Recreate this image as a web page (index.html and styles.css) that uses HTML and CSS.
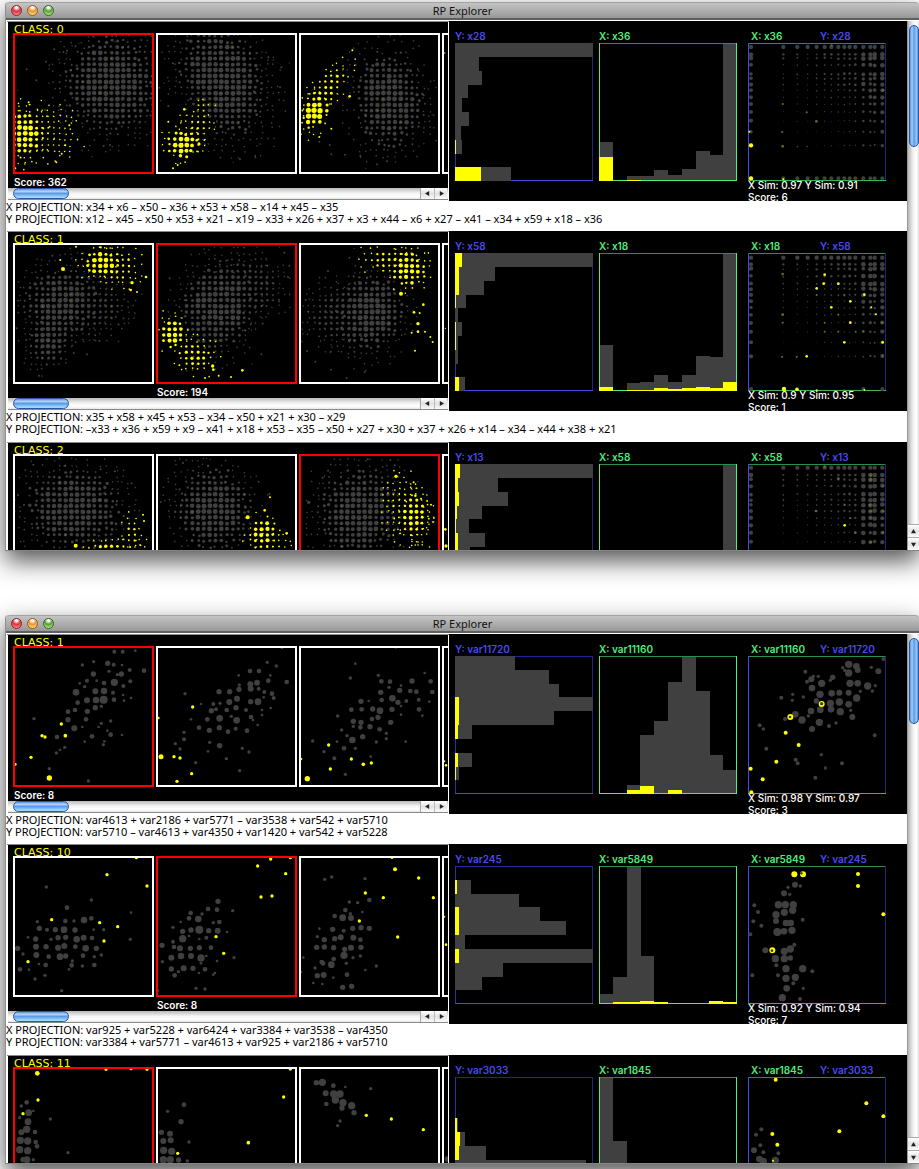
FILE: index.html
```html
<!DOCTYPE html>
<html lang="en">
<head>
<meta charset="utf-8">
<title>RP Explorer</title>
<link rel="stylesheet" href="styles.css">
</head>
<body>
<main class="desktop" id="desktop"></main>
<script src="app.js"></script>
</body>
</html>
```
FILE: styles.css
```css
* { box-sizing: border-box; }
body {
  margin: 0;
  background: #fff;
  font-family: "Inter", Verdana, sans-serif;
  font-size: 10px;
  line-height: 12px;
  color: #000;
}
.desktop {
  display: flex;
  flex-direction: column;
  gap: 64px;
  min-height: 100vh;
  padding: 2px 0 5px 5px;
  overflow: hidden;
}
.window {
  background: #fff;
  border-left: 1px solid #8f8f8f;
  border-bottom: 1px solid #858585;
  border-radius: 4px 4px 0 0;
  box-shadow: 0 10px 24px rgba(0, 0, 0, .68);
}
.titlebar {
  display: flex;
  align-items: center;
  height: 18px;
  padding-left: 5px;
  border-top: 1px solid #a2a2a2;
  border-bottom: 2px solid #5f5f5f;
  border-radius: 4px 4px 0 0;
  background: linear-gradient(#c4c4c4, #989898);
}
.lights { display: flex; gap: 5px; }
.light {
  width: 11px;
  height: 11px;
  padding: 0;
  border: 1px solid;
  border-radius: 50%;
}
.light-close { border-color: #8e2026; background: radial-gradient(circle at 50% 15%, #fff 0 10%, #d8323a 45%, #ee5560 65%, #ffb4b4 100%); }
.light-min { border-color: #9a5a1c; background: radial-gradient(circle at 50% 15%, #fff 0 10%, #e69138 45%, #f6b850 65%, #fff0a0 100%); }
.light-zoom { border-color: #356a20; background: radial-gradient(circle at 50% 15%, #fff 0 10%, #5a9a38 45%, #86c552 65%, #d2f5a0 100%); }
.title {
  flex: 1;
  margin: 0 48px 0 0;
  font: 400 11px/15px "Noto Sans", "Open Sans", sans-serif;
  text-align: center;
  color: #111;
}
.body {
  display: grid;
  grid-template-columns: minmax(0, 1fr) 12px;
  height: 530px;
  padding-top: 1px;
  overflow: hidden;
}
.rows { overflow: hidden; }
.row + .row { padding-bottom: 1px; }
.panes {
  display: grid;
  grid-template-columns: 442px minmax(0, 1fr);
  grid-template-rows: 180px;
  padding-left: 1px;
}
.left { padding: 0 1px; border-top: 1px solid #8a8a8a; min-width: 0; }
.strip {
  height: 166px;
  padding-left: 5px;
  overflow: hidden;
  background: #000;
}
.class-name {
  height: 11px;
  margin: 0;
  padding-left: 1px;
  font-family: "DejaVu Sans", Verdana, sans-serif;
  font-size: 11px;
  font-weight: 400;
  line-height: 15px;
  color: #ff0;
}
.thumbs { display: flex; gap: 2px; }
.thumb { flex: none; width: 141px; }
.plot {
  display: block;
  width: 141px;
  height: 141px;
  padding: 0;
  border: 2px solid #fff;
  background: #000;
}
.plot[aria-pressed="true"] { border-color: #f00; }
.plot svg, .chart svg { display: block; width: 100%; height: 100%; overflow: hidden; }
.score {
  padding: 2px 0 0 1px;
  font-weight: 600;
  color: #fff;
}
.hbar {
  display: flex;
  align-items: center;
  height: 12px;
  padding: 0 1px 0 5px;
  border-bottom: 1px solid #8a8a8a;
  background: linear-gradient(#b8b8b8, #f2f2f2 45%, #fff 75%, #e6e6e6);
}
.hthumb {
  width: 56px;
  height: 11px;
  border: 1px solid #2b56a4;
  border-radius: 6px;
  background: linear-gradient(#5a8fdc, #b8d6f8 25%, #5b9bea 50%, #8fcaf8 80%, #a8e0ff);
}
.harrows { display: flex; margin-left: auto; }
.arrow {
  display: flex;
  align-items: center;
  justify-content: center;
  width: 13px;
  height: 11px;
  padding: 0;
  border: 0;
  border-left: 1px solid #bbb;
  background: linear-gradient(#fff, #e2e2e2 50%, #fafafa);
}
.harrows .arrow:first-child {
  border-left: 0;
  border-radius: 0;
  box-shadow: -1px 0 #a8a8a8;
}
.arrow svg { width: 5px; height: 5px; fill: #222; }
.right {
  display: flex;
  align-items: flex-start;
  padding: 9px 0 0 6px;
  background: #000;
}
.chart-block { width: 138px; margin-right: 6px; }
.chart-block + .chart-block { margin-right: 11px; }
.chart-label {
  display: grid;
  grid-template-columns: 69px 1fr;
  height: 13px;
  margin: 0;
  font-weight: 600;
  white-space: nowrap;
}
.pair { padding-left: 3px; }
.green { color: #4fec7d; }
.blue { color: #4a4aee; }
.chart { width: 138px; height: 138px; }
.sim { margin: -2px 0 0; font-weight: 500; color: #fff; white-space: nowrap; }
.projection {
  height: 30px;
  margin: 0;
  font-family: "Noto Sans", "Open Sans", sans-serif;
  font-size: 11px;
  white-space: nowrap;
}
.vbar {
  display: flex;
  flex-direction: column;
  align-items: center;
  padding-top: 4px;
  border-left: 1px solid #9a9a9a;
  background: linear-gradient(90deg, #b5b5b5, #f0f0f0 45%, #fff 75%, #e2e2e2);
}
.vthumb {
  width: 10px;
  border: 1px solid #2b56a4;
  border-radius: 5px;
  background: linear-gradient(90deg, #5a8fdc, #a5ccf8 25%, #5b9bea 50%, #8fcaf8 80%, #5a8fdc);
}
.varrows { width: 100%; margin-top: auto; }
.varrows .arrow { width: 100%; height: 13px; border-left: 0; border-top: 1px solid #aaa; }
```
FILE: app.js
```javascript
const GRAY = '#404040';
const YELLOW = '#ffff00';
const DIM = '#6a6a20';

function makeRandom(seed) {
  let s = seed;
  return () => {
    s = (s * 16807) % 2147483647;
    return s / 2147483647;
  };
}

const dot = (x, y, r, fill) =>
  `<circle cx="${x.toFixed(1)}" cy="${y.toFixed(1)}" r="${r.toFixed(1)}" fill="${fill}"/>`;

/* "x y r, x y r" -> circles */
const dots = (text, fill) => text.split(',').filter(t => t.trim()).map(t => {
  const [x, y, r] = t.trim().split(/\s+/).map(Number);
  return dot(x, y, r, fill);
}).join('');

/* Binned cloud: dot size falls with the distance from the centre. */
function cloud([cx, cy, rx, ry, deg, max], fill, rnd) {
  const step = 17.3, a = deg * Math.PI / 180;
  let out = '';
  const reach = Math.max(rx, ry) * 1.4;
  for (let gx = Math.floor((cx - reach) / step); gx * step < cx + reach; gx++) {
    for (let gy = Math.floor((cy - reach) / step); gy * step < cy + reach; gy++) {
      const x = gx * step + 6, y = gy * step + 3;
      const dx = x - cx, dy = y - cy;
      const u = (dx * Math.cos(a) + dy * Math.sin(a)) / rx;
      const v = (dy * Math.cos(a) - dx * Math.sin(a)) / ry;
      const d = Math.sqrt(u * u + v * v) + (rnd() - .5) * .18;
      if (d > 1.3 || (d > .85 && rnd() < (d - .75) * 1.3)) continue;
      const r = Math.max(2.4, max * .95 * (1.2 - d * d) * (.75 + rnd() * .35));
      const j = d > .7 ? 9 : 2;
      out += dot(x + (rnd() - .5) * j, y + (rnd() - .5) * j, Math.min(r, max), fill);
      if (fill === GRAY && d < .9 && rnd() < .03) out += dot(x, y, 2.5, DIM);
    }
  }
  return out;
}

const windows = [
  {
    vthumb: 122,
    rows: [
      {
        name: 'CLASS: 0', selected: 0, score: 'Score: 362',
        thumbs: [
          { box: '45 105', g: [[335, 250, 165, 165, -20, 7.4]], gs: '163 148 3,190 156 3,237 130 2,283 112 2,80 208 3,109 241 3,53 271 2,138 185 3,201 152 3,345 125 2,386 138 2,276 470 2,311 438 3,330 435 3,135 330 3,150 380 3,180 345 3', y: [[65, 402, 75, 78, 0, 7.4], [120, 395, 100, 85, 0, 3]], ys: '86 307 3,46 505 3,169 487 3,185 461 3,196 436 3,208 376 3' },
          { box: '474 105', g: [[668, 240, 135, 195, -22, 7.4]], gs: '478 263 3,482 302 2,505 318 3,519 190 3,805 172 3,820 180 2,844 202 3,868 189 2,840 262 3,700 487 2,766 472 3,720 478 3,574 107 2', y: [[550, 432, 56, 52, 0, 7.6], [590, 385, 45, 80, 25, 3.4]], ys: '553 328 4,519 505 3,505 365 3,533 495 3' },
          { box: '36 105', g: [[298, 300, 118, 165, -8, 7.4]], gs: '230 505 2,264 493 3,294 484 3,214 467 3,168 464 3,127 463 3,91 425 3,404 286 3,430 344 2,208 131 2,122 435 3,386 208 3', y: [[75, 337, 44, 62, 15, 8], [115, 265, 42, 95, 35, 4.4]], ys: '190 151 3,182 289 4,127 386 3,91 411 3' },
          { box: '0 0', g: [], y: [], ys: '2 54 2' }
        ],
        yVar: 'x28', xVar: 'x36', sim: 'X Sim: 0.97 Y Sim: 0.91', pairScore: 'Score: 6',
        yHist: [[414, 72, 81, 39, 20, 42, 18, 21, 0, 167], [0, 0, 0, 0, 0, 0, 0, 2, 0, 78]],
        xHist: [[118, 0, 16, 16, 34, 19, 37, 91, 79, 414], [73, 0, 4, 0, 0, 0, 0, 0, 0, 0]],
        lattice: { box: '474 129', ox: 0, rows: [141, 163, 175, 195, 222, 236, 253, 271, 292, 313, 336, 363, 395, 436, 535], bottom: 6, side: [1.1, 1.05, 1.1, 1.2],
          ys: '483 436 6.5,483 535 6.5,478 395 3,580 538 3', ds: '578 312 3,576 396 3,578 439 4,650 337 3,679 364 4,622 440 2,651 440 2,725 136 3,879 271 4' },
        xp: 'x34 + x6 – x50 – x36 + x53 + x58 – x14 + x45 – x35',
        yp: 'x12 – x45 – x50 + x53 + x21 – x19 – x33 + x26 + x37 + x3 + x44 – x6 + x27 – x41 – x34 + x59 + x18 – x36'
      },
      {
        name: 'CLASS: 1', selected: 1, score: 'Score: 194',
        thumbs: [
          { box: '45 62', g: [[185, 235, 130, 120, -15, 7.2], [150, 340, 68, 95, 20, 6.8], [300, 250, 95, 85, 0, 4.4]], gs: '157 94 3,261 390 3,117 454 3,221 386 3,298 350 3,54 229 3,50 312 3', y: [[305, 115, 58, 50, 0, 7], [350, 125, 75, 62, 20, 4]], ys: '189 134 6,181 107 3,438 158 4,396 175 5,392 197 4,228 67 3,411 203 3' },
          { box: '474 62', g: [[655, 245, 125, 155, 25, 7.4], [750, 190, 110, 95, -20, 4.6]], gs: '838 68 2,853 85 3,868 124 3,864 158 3,837 226 3,784 390 3,509 162 3,756 419 2', y: [[518, 328, 42, 55, 0, 6.8], [585, 395, 62, 58, 10, 5]], ys: '638 425 5,640 436 4,615 461 3,727 438 4,693 458 3,656 454 3' },
          { box: '36 62', g: [[245, 265, 112, 135, 10, 7.6], [145, 270, 105, 95, 0, 4.6]], gs: '196 72 2,181 100 3,117 140 3,50 227 3,173 461 3,126 436 3,79 412 3,54 380 3,227 443 3', y: [[355, 135, 62, 68, 20, 6.4], [290, 105, 80, 34, 0, 4.4]], ys: '336 208 6,375 264 4,403 241 4,387 298 5,392 266 3,378 379 3,424 338 3,431 353 3,387 322 4,408 322 3,368 325 3' },
          { box: '0 0', g: [], y: [], ys: '4 250 2' }
        ],
        yVar: 'x58', xVar: 'x18', sim: 'X Sim: 0.9 Y Sim: 0.95', pairScore: 'Score: 1',
        yHist: [[414, 119, 87, 33, 9, 21, 9, 9, 0, 30], [21, 12, 12, 2, 0, 2, 2, 0, 0, 12]],
        xHist: [[139, 0, 25, 27, 49, 27, 49, 105, 103, 414], [13, 0, 2, 2, 8, 5, 8, 13, 8, 28]],
        lattice: { box: '474 84', ox: 0, rows: [98, 118, 132, 154, 176, 192, 210, 229, 248, 269, 293, 320, 352, 394, 492], bottom: 0, side: [1.1, 1.05, 1.1, 1.2],
          ys: '582 492 6.5,621 493 5.5,701 176 4,745 176 4,680 190 4,704 149 4,781 229 4,724 247 4,823 209 4,844 247 3,858 268 3,781 293 4,763 352 4,878 352 4,650 394 4,680 496 3,823 495 3', ds: '578 147 4,578 269 4,578 293 3,680 210 3,704 293 3,704 320 3,745 269 3,763 210 3,745 320 3,797 320 3,820 320 3,876 293 4,576 396 3,620 396 3,878 394 3,763 496 3,745 496 2' },
        xp: 'x35 + x58 + x45 + x53 – x34 – x50 + x21 + x30 – x29',
        yp: '–x33 + x36 + x59 + x9 – x41 + x18 + x53 – x35 – x50 + x27 + x30 + x37 + x26 + x14 – x34 – x44 + x38 + x21'
      },
      {
        name: 'CLASS: 2', selected: 2, score: '',
        thumbs: [
          { box: '45 78', g: [[222, 235, 165, 140, 10, 7.3]], gs: '178 85 3,345 124 3,302 118 3,100 104 3,395 160 3,54 195 3', y: [[320, 360, 100, 30, -8, 5.2], [395, 305, 28, 52, 0, 3.6]], ys: '227 347 6,429 254 3,432 273 3' },
          { box: '474 78', g: [[640, 240, 128, 148, -8, 7.3]], gs: '549 99 3,620 85 2,482 216 3,808 192 3,776 155 3', y: [[790, 310, 50, 55, 10, 6.2], [810, 345, 58, 34, 0, 3]], ys: '743 262 6,810 202 3,794 241 4,860 310 4' },
          { box: '905 78', g: [[1080, 250, 138, 155, 12, 7.3]], gs: '986 122 3,970 143 3,1105 88 3,1173 90 3,1186 106 3,928 217 5', y: [[1245, 250, 48, 80, 0, 6], [1220, 240, 66, 100, -15, 3.2]], ys: '1190 139 5,1243 157 3,1295 224 3' },
          { box: '0 0', g: [], y: [], ys: '4 220 4,6 270 5' }
        ],
        yVar: 'x13', xVar: 'x58', sim: '', pairScore: '',
        yHist: [[414, 129, 160, 81, 42, 90, 45, 20, 0, 60], [15, 9, 12, 6, 2, 9, 9, 0, 0, 9]],
        xHist: [[0, 0, 0, 0, 0, 0, 0, 0, 0, 414], [0, 0, 0, 0, 0, 0, 0, 0, 0, 0]],
        lattice: { box: '894 102', ox: 420, rows: [113, 135, 149, 168, 193, 210, 225, 243, 264, 285, 308, 336, 370], bottom: 3, side: [1.8, 1.8, 1.8, 1.8],
          ys: '1184 286 4', ds: '1098 243 4,1165 146 4,1184 225 3,1201 264 3,1216 308 4,1262 135 4,1262 149 4,1299 168 3,1260 225 4,1262 243 4,1299 243 4,1262 264 3,1299 308 4,1262 336 4,1124 110 4' },
        xp: '', yp: ''
      }
    ]
  },
  {
    vthumb: 86,
    rows: [
      {
        name: 'CLASS: 1', selected: 0, score: 'Score: 8',
        thumbs: [
          { box: '45 54', gs: '343 65 6,368 65 6,406 62 4,281 95 5,247 105 5,323 100 8,341 104 6,366 105 4,389 120 6,432 122 7,327 124 5,280 132 8,364 132 8,352 134 5,261 152 6,290 152 4,312 159 7,343 157 11,391 154 6,239 160 4,254 170 5,370 168 6,228 187 10,286 184 9,312 183 10,339 188 6,369 195 4,393 204 4,233 218 7,261 211 9,288 210 10,311 209 12,342 209 7,372 212 4,204 245 7,225 240 7,262 244 8,286 233 8,304 229 5,102 266 5,204 269 8,258 268 7,332 273 5,304 280 5,223 295 9,247 291 4,296 291 4,322 302 4,171 321 7,276 319 7,332 314 7,366 315 4,254 335 4,313 334 4,310 344 5,194 352 5,180 360 4,169 369 5,148 416 5,265 453 5', ys: '184 282 5,126 317 5,135 321 5,196 317 5.5,93 382 5,46 403 4,148 444 8' },
          { box: '474 54', gs: '846 52 5,802 97 5,829 108 5,750 123 7,777 123 7,716 136 4,811 136 4,718 165 5,751 163 9,771 158 9,805 152 7,860 156 7,657 185 8,689 185 8,717 178 8,752 176 9,776 176 6,793 186 6,816 191 7,821 204 6,555 191 5,603 222 4,640 222 6,660 220 5,688 216 9,711 206 9,752 215 8,774 215 10,791 202 4,812 234 4,634 242 8,648 238 6,680 240 7,708 233 8,738 240 6,786 240 4,573 268 4,622 268 7,659 265 10,694 259 5,710 271 10,753 261 7,759 270 4,786 255 4,597 293 7,628 301 8,658 293 8,684 305 7,707 296 6,741 302 7,773 285 4,552 307 5,552 328 6,526 341 5,540 357 5,629 337 5,659 347 8,624 364 4,727 355 5,747 366 5,679 386 5,587 398 5,719 422 5', ys: '578 231 5,475 264 4,483 380 7.5,522 380 5,540 384 5,575 431 5,531 454 5' },
          { box: '905 54', gs: '1189 52 4,1068 101 4,1053 144 5,1137 136 5,1276 129 4,1146 154 7,1172 155 7,1238 153 8,1294 154 7,1205 167 4,1169 172 5,1144 187 8,1201 181 8,1233 183 7,1251 185 7,1299 186 7,1179 205 10,1085 214 8,1108 213 4,1147 210 7,1196 217 8,1221 213 6,1258 209 6,1290 215 4,1205 228 4,1056 239 7,1087 238 7,1120 237 8,1142 242 10,1178 238 8,1259 238 7,1015 258 5,1205 254 4,1269 257 4,1062 274 8,1085 277 8,1118 267 7,1136 262 8,1174 277 8,1062 289 5,1083 292 7,1112 290 8,1141 298 7,1027 300 5,1161 310 5,1043 317 5,1090 320 8,1161 326 5,1059 330 10,1013 335 4,940 333 5,1131 336 5,1219 335 4,1034 355 7,1068 355 5,974 365 5,1005 385 6,1114 380 4,1038 433 5', ys: '988 345 5,905 387 4,1056 387 5,993 417 5,1092 403 5.5,1116 399 5,924 446 8' },
          { box: '0 0', gs: '', ys: '1 340 3,6 352 4' }
        ],
        yVar: 'var11720', xVar: 'var11160', sim: 'X Sim: 0.98 Y Sim: 0.97', pairScore: 'Score: 3',
        yHist: [[180, 282, 311, 414, 297, 51, 0, 51, 12, 0], [0, 0, 0, 12, 12, 9, 0, 9, 2, 0]],
        xHist: [[0, 0, 28, 177, 220, 337, 414, 310, 118, 73], [0, 0, 11, 24, 0, 13, 0, 0, 0, 0]],
        scatter: { box: '894 138', gs: '1300 147 6,1196 163 11,1219 169 10,1223 180 9,1264 172 5,1285 184 9,1178 173 5,1184 181 5,1196 189 11,1066 185 6,1090 199 5,1105 199 5,1084 208 9,1071 215 6,1148 202 8,1141 211 5,1115 220 11,1200 220 11,1223 220 10,1253 228 11,1276 227 5,1086 234 10,1267 243 5,1231 244 5,1110 253 11,1145 250 10,1168 248 9,1196 248 9,1028 253 5,994 263 6,1060 261 5,1027 271 5,1220 264 11,1099 273 8,1141 280 11,1168 276 11,1196 283 10,1111 299 10,1143 298 10,1171 305 11,1202 301 5,1083 303 10,1036 313 10,1075 318 5,1207 321 9,1005 327 6,1056 330 11,1108 337 11,1158 339 5,1137 348 6,1086 357 9,929 346 6,940 357 5,1274 376 6,949 416 6,1114 434 5,1037 449 6,1043 460 6,1126 474 5,1176 460 6,1096 503 6', ys: '1115 282 9,1021 321 9,1007 368 6,1046 405 6,979 455 6,902 476 6,938 508 6,904 547 6', gs2: '1115 281 5,1020 321 4' },
        xp: 'var4613 + var2186 + var5771 – var3538 + var542 + var5710',
        yp: 'var5710 – var4613 + var4350 + var1420 + var542 + var5228'
      },
      {
        name: 'CLASS: 10', selected: 1, score: 'Score: 8',
        thumbs: [
          { box: '45 57', gs: '139 144 5,274 183 5,201 206 7,393 221 4,112 248 5,196 246 7,222 246 5,252 243 10,274 238 7,118 268 8,141 272 6,166 272 8,192 272 10,225 273 8,281 272 4,311 272 5,84 295 4,107 300 8,153 301 5,174 296 8,197 295 8,230 301 10,251 296 9,276 297 7,391 301 5,53 328 8,108 323 9,138 323 8,174 326 9,193 321 9,226 323 7,257 328 10,289 328 8,69 345 5,109 348 9,146 353 7,180 353 10,197 351 8,249 350 7,283 353 5,304 348 5,217 366 5,117 375 4,137 378 7,215 379 7,247 381 5,283 378 7,207 391 4,60 391 7,87 392 4,135 409 5,105 420 5,185 455 5', ys: '409 56 5,321 107 5,441 141 5,155 242 5,299 251 5,353 263 5,312 306 5,84 368 5' },
          { box: '474 57', gs: '654 187 8,624 210 7,651 212 7,698 215 5,572 222 7,606 225 5,567 238 7,595 240 10,542 249 4,640 251 5,658 249 7,519 265 5,548 277 8,573 273 8,598 272 12,626 275 8,653 275 9,681 279 4,567 291 4,548 299 11,598 300 4,619 296 6,519 308 6,486 319 8,522 324 7,540 328 9,571 328 8,598 326 8,633 326 7,514 356 9,543 351 10,573 351 9,603 357 11,619 351 4,487 368 5,651 366 4,702 356 5,603 373 4,514 390 8,551 388 9,579 388 8,615 391 7,535 398 5,524 409 7,597 402 4,640 407 4,645 402 4,588 448 5,615 450 5,474 455 4', ys: '812 60 5,871 56 5,773 81 5,857 104 5,783 174 5,816 171 5,648 293 5,671 343 5' },
          { box: '905 57', gs: '976 121 5,997 114 5,1097 119 5,1110 183 7,1050 189 5,1075 191 5,1038 213 7,1053 224 5,1089 219 4,1006 231 7,1030 236 10,1055 237 9,960 269 4,1000 271 8,1033 275 6,1060 268 8,1085 266 8,1110 268 8,954 293 5,975 302 8,1006 299 8,1024 295 9,1062 296 9,1083 302 7,952 325 8,975 324 8,1003 326 8,1036 331 8,1055 326 9,1085 325 8,1034 349 11,912 356 4,1061 356 5,1083 351 5,1003 360 7,967 369 7,971 373 7,996 377 10,947 387 5,1041 373 5,1098 393 4,1131 381 5,905 399 4,954 410 8,973 408 9,1043 407 7,1002 416 4,942 432 4,969 435 4,1030 445 8,1057 442 8', ys: '1178 56 4,1187 91 6,1258 117 5,1098 162 5,1152 176 5,1302 176 5,1080 246 5,1195 294 5' },
          { box: '0 0', gs: '', ys: '1 176 3,6 260 4' }
        ],
        yVar: 'var245', xVar: 'var5849', sim: 'X Sim: 0.92 Y Sim: 0.94', pairScore: 'Score: 7',
        yHist: [[0, 48, 192, 254, 333, 31, 414, 144, 80, 0], [0, 6, 0, 12, 12, 0, 12, 0, 0, 0]],
        xHist: [[31, 82, 414, 144, 6, 0, 0, 0, 8, 4], [0, 5, 5, 10, 6, 0, 0, 0, 9, 5]],
        scatter: { box: '894 78', gs: '1035 134 9,1051 138 5,1014 142 5,1002 160 9,1019 163 5,913 196 6,924 216 6,985 194 11,1006 194 11,1030 194 11,1003 217 11,1028 211 11,978 224 11,978 243 9,1058 239 6,910 244 6,934 257 6,1008 249 10,1022 249 10,982 276 12,1002 274 10,1026 271 11,901 283 6,1033 314 6,946 331 9,1003 334 11,1021 327 11,976 356 11,1003 356 11,1021 354 8,979 376 6,1008 386 11,1058 386 11,1087 394 6,907 406 6,984 406 6,1008 415 11,1036 412 11,1030 430 6,1010 445 10,1060 445 5,997 473 11,1050 477 6', ys: '1033 103 9,1059 103 9,1224 102 6,1224 138 6,1300 223 6,967 331 9', gs2: '1054 100 4,966 332 4' },
        xp: 'var925 + var5228 + var6424 + var3384 + var3538 – var4350',
        yp: 'var3384 + var5771 – var4613 + var925 + var2186 + var5710'
      },
      {
        name: 'CLASS: 11', selected: 0, score: '',
        thumbs: [
          { box: '45 687', gs: '80 787 7,64 798 5,86 818 10,100 813 4,59 833 5,84 845 10,151 837 5,80 868 11,64 877 9,105 876 7,61 901 11,83 903 11,107 906 7,111 919 7,59 929 11,83 932 11,204 938 5,69 959 8,81 959 10,100 959 5,64 985 10', ys: '112 700 7,318 688 5,393 686 5,441 688 5,114 780 5,69 821 5' },
          { box: '474 687', gs: '552 794 7,503 814 5,543 845 8,484 877 8,510 881 9,490 903 9,512 901 9,567 906 5,491 931 11,515 934 11,490 959 11,511 959 11,536 960 8,562 963 5', ys: '871 687 5,851 771 5,745 908 5.5,533 940 5' },
          { box: '905 687', gs: '951 728 8,969 727 11,1002 737 7,1038 741 4,1114 746 5,979 760 9,1003 762 11,1022 762 11,1008 780 11,1031 788 11,981 792 7,1028 804 8,1057 797 11,1064 818 8,1022 843 5,1015 857 5', ys: '1101 826 5,1176 837 5,1272 869 5' },
          { box: '0 0', gs: '10 270 8', ys: '' }
        ],
        yVar: 'var3033', xVar: 'var1845', sim: '', pairScore: '',
        yHist: [[0, 0, 0, 9, 31, 93, 393, 300, 200, 60], [0, 0, 0, 6, 15, 12, 0, 0, 0, 0]],
        xHist: [[414, 222, 0, 0, 0, 0, 0, 0, 0, 0], [0, 0, 0, 0, 0, 0, 0, 0, 0, 0]],
        scatter: { box: '894 711', gs: '934 868 6,918 884 6,931 916 6,912 931 9,940 937 6,985 940 6,928 957 10,940 964 11,976 961 11', ys: '977 719 6,1249 790 6,1300 829 6,1168 874 6,967 882 6,982 914 6,969 962 3', gs2: '' },
        xp: '', yp: ''
      }
    ]
  }
];

const COLS = [483, 580, 622, 653, 680, 704, 724, 745, 763, 779, 796, 820, 841, 854, 877];
const COL_W = [.85, .42, .4, .38, .46, .48, .5, .55, .6, .6, .68];

function lattice(l, rnd) {
  let out = '';
  l.rows.forEach((y, j) => {
    COLS.forEach((x, i) => {
      const rowW = Math.max(.45, 1.1 - j * .055);
      const colW = i > 10 ? l.side[i - 11] : COL_W[i];
      let r = 7 * colW * rowW * (.7 + rnd() * .5);
      if (i === 0 || i === 14) r = Math.max(r, 5 + rnd() * 1.5);
      if (j === 0) r = 6.5;
      if (j === 14) r = l.bottom || (i === 0 || i === 11 || i === 14 ? 6 : 0);
      out += dot(x + l.ox, y + (j < 14 && j > 1 ? (rnd() - .5) * 3 : 0), Math.min(r, 7), GRAY);
    });
  });
  return out + dots(l.ds, DIM) + dots(l.ys, YELLOW);
}

const svg = (box, size, inner) =>
  `<svg viewBox="${box} ${size} ${size}" aria-hidden="true">${inner}</svg>`;

function thumb(t, i, row, rnd) {
  const g = (t.g || []).map(c => cloud(c, GRAY, rnd)).join('') + dots(t.gs || '', GRAY);
  const y = (t.y || []).map(c => cloud(c, YELLOW, rnd)).join('') + dots(t.ys || '', YELLOW);
  const on = row.selected === i;
  return `<div class="thumb"><button class="plot" type="button" aria-pressed="${on}" aria-label="Projection ${i + 1}">${svg(t.box, 411, g + y)}</button>${on && row.score ? `<div class="score">${row.score}</div>` : ''}</div>`;
}

const frame = (x, y, top, right, bottom, left) =>
  `<g stroke-width="3"><path stroke="${top}" d="M${x} ${y + 1.5}h414"/><path stroke="${right}" d="M${x + 412.5} ${y}v414"/><path stroke="${left}" d="M${x + 1.5} ${y}v414"/><path stroke="${bottom}" d="M${x} ${y + 412.5}h414"/></g>`;

const crisp = inner => `<g shape-rendering="crispEdges">${inner}</g>`;

function yHist([gray, yellow]) {
  const bars = (list, fill) => crisp(list.map((w, i) => `<rect x="0" y="${(i * 41.4).toFixed(1)}" width="${w}" height="41.8" fill="${fill}"/>`).join(''));
  return svg('0 0', 414, frame(0, 0, '#24249a', '#24247a', '#4747ee', '#30309a') + bars(gray, GRAY) + bars(yellow, YELLOW));
}
function xHist([gray, yellow]) {
  const bars = (list, fill) => crisp(list.map((h, i) => `<rect x="${(i * 41.4).toFixed(1)}" y="${414 - h}" width="41.8" height="${h}" fill="${fill}"/>`).join(''));
  return svg('0 0', 414, bars(gray, GRAY) + frame(0, 0, '#2a9048', '#4fec7d', '#4fec7d', '#4fec7d') + bars(yellow, YELLOW));
}
function pairPlot(row, rnd) {
  const s = row.lattice || row.scatter;
  const [x, y] = s.box.split(' ').map(Number);
  const inner = row.lattice ? lattice(s, rnd) : dots(s.gs, GRAY) + dots(s.ys, YELLOW) + dots(s.gs2, GRAY);
  return svg(s.box, 414, frame(x, y, '#2a9048', '#24247a', '#3cb862', '#4747ee') + inner);
}

const arrow = (label, d) =>
  `<button class="arrow" type="button" aria-label="${label}"><svg viewBox="0 0 6 6"><path d="${d}"/></svg></button>`;

function rowHtml(row, rnd) {
  return `<section class="row">
    <div class="panes">
      <div class="left">
        <div class="strip">
          <h2 class="class-name">${row.name}</h2>
          <div class="thumbs">${row.thumbs.map((t, i) => thumb(t, i, row, rnd)).join('')}</div>
        </div>
        <div class="hbar"><div class="hthumb"></div><div class="harrows">${arrow('Scroll left', 'M5 0v6L0 3z')}${arrow('Scroll right', 'M1 0v6l5-3z')}</div></div>
      </div>
      <div class="right">
        <div class="chart-block"><p class="chart-label blue">Y: ${row.yVar}</p><div class="chart">${yHist(row.yHist)}</div></div>
        <div class="chart-block"><p class="chart-label green">X: ${row.xVar}</p><div class="chart">${xHist(row.xHist)}</div></div>
        <div class="chart-block"><p class="chart-label pair"><span class="green">X: ${row.xVar}</span><span class="blue">Y: ${row.yVar}</span></p><div class="chart">${pairPlot(row, rnd)}</div>
        <p class="sim">${row.sim}<br>${row.pairScore}</p></div>
      </div>
    </div>
    ${row.xp ? `<p class="projection">X PROJECTION: ${row.xp}<br>Y PROJECTION: ${row.yp}</p>` : ''}
  </section>`;
}

document.getElementById('desktop').innerHTML = windows.map((w, k) => {
  const rnd = makeRandom(4211 + k);
  return `<section class="window">
    <header class="titlebar">
      <div class="lights"><button class="light light-close" type="button" aria-label="Close"></button><button class="light light-min" type="button" aria-label="Minimize"></button><button class="light light-zoom" type="button" aria-label="Zoom"></button></div>
      <h1 class="title">RP Explorer</h1>
    </header>
    <div class="body">
      <div class="rows">${w.rows.map(r => rowHtml(r, rnd)).join('')}</div>
      <div class="vbar"><div class="vthumb" style="height:${w.vthumb}px"></div><div class="varrows">${arrow('Scroll up', 'M0 5h6L3 0z')}${arrow('Scroll down', 'M0 1h6L3 6z')}</div></div>
    </div>
  </section>`;
}).join('');
```
